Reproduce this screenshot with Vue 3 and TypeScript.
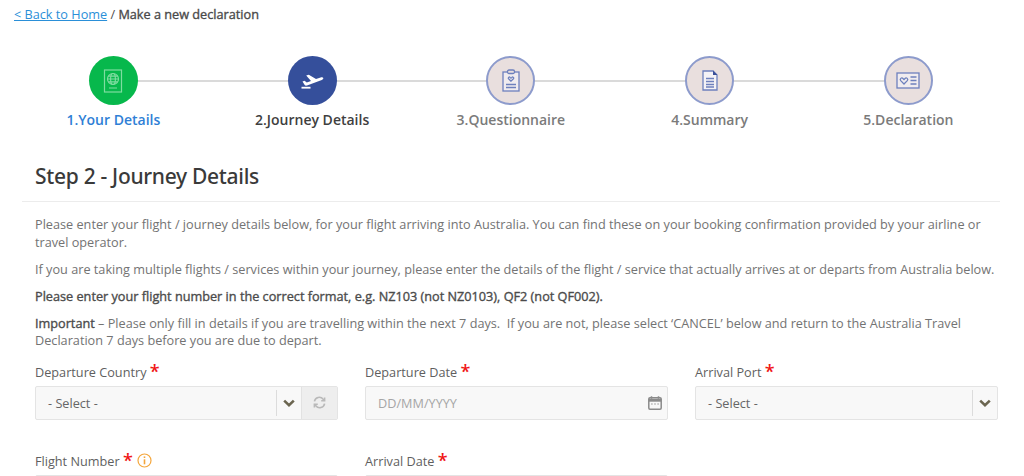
<script setup lang="ts">
const steps = [
  { n: '1.Your Details', cls: 'done', icon: 'passport' },
  { n: '2.Journey Details', cls: 'active', icon: 'plane' },
  { n: '3.Questionnaire', cls: '', icon: 'clip' },
  { n: '4.Summary', cls: '', icon: 'doc' },
  { n: '5.Declaration', cls: '', icon: 'card' },
]
</script>

<template>
  <div class="page">
    <div class="crumb"><a class="back">&lt; Back to Home</a> / <span class="cur">Make a new declaration</span></div>

    <div class="stepper">
      <div class="line"></div>
      <div v-for="s in steps" :key="s.n" class="step" :class="s.cls">
        <div class="circle">
          <svg v-if="s.icon === 'passport'" width="20" height="24" viewBox="0 0 20 24" fill="none" stroke="#7fdca0" stroke-width="1.2">
            <rect x="1.5" y="1" width="17" height="22" />
            <circle cx="10" cy="10" r="5.5" />
            <ellipse cx="10" cy="10" rx="2.4" ry="5.5" />
            <path d="M4.5 10h11M5.3 7.2h9.4M5.3 12.8h9.4M6 19h8" />
          </svg>
          <svg v-else-if="s.icon === 'plane'" width="24" height="18" viewBox="0 0 24 18" fill="#fff">
            <path d="M2.5 9.5l2-.7 2.3 1.7 4.2-1.5L6.2 3.6l2.6-.9 7.2 4.3 4.6-1.6c1.2-.4 2.4-.1 2.7.7.2.8-.4 1.5-1.5 1.9L7 13.5c-1 .3-1.8.1-2.3-.5z" />
            <rect x="1.5" y="14.8" width="9" height="1.8" />
          </svg>
          <svg v-else-if="s.icon === 'clip'" width="18" height="23" viewBox="0 0 18 23" fill="none" stroke="#6d80bd" stroke-width="1.3">
            <rect x="1" y="3" width="16" height="19" fill="#f0ecef" />
            <rect x="5.5" y="1" width="7" height="3.5" rx="1.5" fill="#e9dfde" />
            <path d="M9 12.2 6.6 9.8c-.9-1 .6-2.3 1.5-1.4l.9.8.9-.8c.9-.9 2.4.4 1.5 1.4z" />
            <path d="M4 15.5h10M4 18.5h10" />
          </svg>
          <svg v-else-if="s.icon === 'doc'" width="16" height="21" viewBox="0 0 16 21" fill="none" stroke="#6d80bd" stroke-width="1.3">
            <path d="M1 1h10l4 4v15H1z" fill="#f4f2f6" />
            <path d="M11 .6 15.4 5H11z" fill="#3a4f98" stroke="none" />
            <path d="M4 8.5h8M4 11.5h8M4 14.5h8M4 17h8" />
          </svg>
          <svg v-else width="24" height="17" viewBox="0 0 24 17" fill="none" stroke="#6d80bd" stroke-width="1.3">
            <rect x="1" y="1" width="22" height="15" fill="#f0ecef" />
            <path d="M8 12 4.7 8.6c-1.4-1.6.9-3.6 2.3-2.1l1 1 1-1c1.4-1.5 3.7.5 2.3 2.1z" />
            <path d="M14.5 5h6M14.5 8.5h6M14.5 12h6" />
          </svg>
        </div>
        <div class="label">{{ s.n }}</div>
      </div>
    </div>

    <div class="head"><h1>Step 2 - Journey Details</h1></div>

    <div class="body">
      <p>Please enter your flight / journey details below, for your flight arriving into Australia. You can find these on your booking confirmation provided by your airline or travel operator.</p>
      <p>If you are taking multiple flights / services within your journey, please enter the details of the flight / service that actually arrives at or departs from Australia below.</p>
      <p><b>Please enter your flight number in the correct format, e.g. NZ103 (not NZ0103), QF2 (not QF002).</b></p>
      <p><b>Important</b> – Please only fill in details if you are travelling within the next 7 days. &nbsp;If you are not, please select ‘CANCEL’ below and return to the Australia Travel Declaration 7 days before you are due to depart.</p>

      <div class="form">
        <div class="field">
          <label>Departure Country <i>*</i></label>
          <div class="control">
            <span class="val">- Select -</span>
            <span class="chev">
              <svg width="12" height="8" viewBox="0 0 12 8"><path d="M1.2 1.6 6 6.2l4.8-4.6" fill="none" stroke="#6b6550" stroke-width="2.6" /></svg>
            </span>
            <span class="refresh">
              <svg width="13" height="13" viewBox="0 0 13 13" fill="none" stroke="#b9b9b9" stroke-width="1.6">
                <path d="M1.4 5.4A5 5 0 0 1 10.2 3.2L11.6 4.6" />
                <path d="M11.6 1.4v3.4H8.2" />
                <path d="M11.6 7.6A5 5 0 0 1 2.8 9.8L1.4 8.4" />
                <path d="M1.4 11.6V8.2h3.4" />
              </svg>
            </span>
          </div>
        </div>
        <div class="field">
          <label>Departure Date <i>*</i></label>
          <div class="control date">
            <span class="ph">DD/MM/YYYY</span>
            <svg class="cal" width="14" height="14" viewBox="0 0 14 14" fill="none" stroke="#8a8a8a" stroke-width="1.5">
              <rect x="0.8" y="1.8" width="12.4" height="11.4" rx="1.2" />
              <path d="M0.8 4.2h12.4" stroke-width="3" />
              <path d="M3.5.3v2.4M10.5.3v2.4" />
              <path d="M3.2 8h1.4M6.3 8h1.4M9.4 8h1.4" stroke-width="1.2" />
            </svg>
          </div>
        </div>
        <div class="field">
          <label>Arrival Port <i>*</i></label>
          <div class="control">
            <span class="val">- Select -</span>
            <span class="chev">
              <svg width="12" height="8" viewBox="0 0 12 8"><path d="M1.2 1.6 6 6.2l4.8-4.6" fill="none" stroke="#6b6550" stroke-width="2.6" /></svg>
            </span>
          </div>
        </div>
        <div class="field">
          <label>Flight Number <i>*</i>
            <svg class="info" width="15" height="15" viewBox="0 0 15 15" fill="none" stroke="#f4a63c" stroke-width="1.2">
              <circle cx="7.5" cy="7.5" r="6.5" />
              <path d="M7.5 6.3v5" stroke-width="1.6" />
              <path d="M7.5 3.4v1.6" stroke-width="1.6" />
            </svg>
          </label>
          <div class="control"></div>
        </div>
        <div class="field">
          <label>Arrival Date <i>*</i></label>
          <div class="control"></div>
        </div>
      </div>
    </div>
  </div>
</template>

<style>
html, body { margin: 0; background: #fff; overflow: hidden; }
</style>

<style scoped>
.page {
  width: 1024px;
  height: 476px;
  overflow: hidden;
  font-family: "Open Sans", "Liberation Sans", sans-serif;
  font-size: 12.7px;
  color: #737373;
}
.crumb { padding: 6px 14px 0; line-height: 17px; color: #4f4f4f; height: 56px; box-sizing: border-box; }
.back { color: #2a8fd8; text-decoration: underline; }
.cur { color: #4a4a4a; -webkit-text-stroke: 0.35px #4a4a4a; }
.stepper { position: relative; display: flex; margin-left: 14px; width: 994px; }
.line { position: absolute; left: 99px; right: 99px; top: 24px; height: 2px; background: #dadada; }
.step { position: relative; width: 198.75px; display: flex; flex-direction: column; align-items: center; }
.circle {
  position: relative;
  width: 49px; height: 49px; box-sizing: border-box; border-radius: 50%;
  display: flex; align-items: center; justify-content: center;
  background: #e9dfde; border: 2px solid #8d9bcc;
}
.step.done .circle { background: #07b84c; border: 0; }
.step.active .circle { background: #354f9b; border: 0; }
.label { margin-top: 5px; font-size: 14px; line-height: 20px; font-weight: 600; color: #7b7b7b; }
.step.done .label { color: #2f7fd6; }
.step.active .label { color: #3f3f3f; }
.head { margin: 24px 24px 0 22px; padding: 0 13px; height: 47px; border-bottom: 1px solid #ececec; }
h1 { margin: 0; font-family: "Noto Sans", sans-serif; font-size: 21px; font-weight: 500; line-height: 45px; color: #3a3a3a; letter-spacing: -0.3px; }
.body { padding: 14px 26px 0 35px; }
p { margin: 0 0 9.5px; line-height: 17.5px; }
b { font-weight: 400; color: #4b4b4b; -webkit-text-stroke: 0.35px #4b4b4b; }
.form { display: grid; grid-template-columns: repeat(3, 303px); column-gap: 27px; row-gap: 30px; margin-top: 11px; }
label { display: block; height: 25px; line-height: 22px; font-size: 12.7px; color: #5f5f5f; white-space: nowrap; }
label i { position: relative; top: 1px; font-style: normal; color: #f01616; font-size: 18px; font-weight: 600; line-height: 14px; }
.info { vertical-align: -2px; margin-left: 4px; }
.control {
  position: relative; display: flex; align-items: center; height: 34px; box-sizing: border-box;
  border: 1px solid #e4e4e4; border-radius: 2px; background: #f8f8f8;
}
.val { flex: 1; padding: 1px 0 0 12px; font-size: 12.7px; color: #666; }
.chev { width: 25px; height: 26px; box-sizing: border-box; border-left: 1px solid #dcdcdc; display: flex; align-items: center; justify-content: center; }
.refresh { width: 35px; height: 32px; background: #eeeeee; border-left: 1px solid #e2e2e2; display: flex; align-items: center; justify-content: center; }
.date { padding-left: 12px; justify-content: space-between; padding-right: 5px; }
.ph { font-size: 12.7px; color: #a6a6a6; }
.cal { flex: none; }
</style>
